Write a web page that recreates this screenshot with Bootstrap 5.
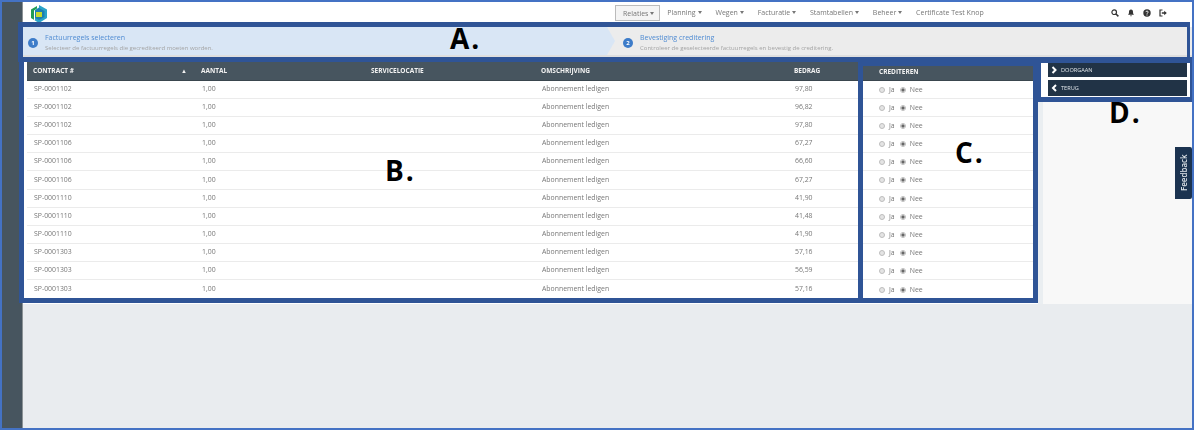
<!DOCTYPE html>
<html lang="nl">
<head>
    <meta charset="UTF-8">
    <meta name="viewport" content="width=device-width, initial-scale=1.0">
    <title>Crediteren</title>
    <link href="https://cdn.jsdelivr.net/npm/bootstrap@5.3.0/dist/css/bootstrap.min.css" rel="stylesheet">
    <style>
        html, body { height: 100%; overflow: hidden; }
        body { font-family: "Open Sans", "Liberation Sans", sans-serif; background: #e9ecef; color: #777; }
        .shot { position: relative; width: 1194px; height: 430px; }
        .side-strip { width: 23px; background: #47555f; border-right: 1px solid #8b9296; }
        .page-body { filter: blur(0.3px); }

        .top-bar { height: 27px; background: #fff; padding: 5px 0 0 7px; align-items: flex-start; }
        .top-logo { display: block; }
        .top-bar .nav-link { font-size: 7px; line-height: 16px; height: 16px; padding: 0 6.9px; color: #777; border: 0; }
        .top-bar .nav-link.current { background: #f4f4f4; border: 1px solid #bbb; padding: 0 5px 0 7px; }
        .top-bar .dropdown-toggle::after { margin-left: 2px; vertical-align: 1px; border-top-width: 3px; border-left-width: 2.5px; border-right-width: 2.5px; }
        .top-menu { margin-left: 567px; }
        .top-icons { margin-left: 120px; gap: 8px; padding-top: 4px; }

        .step-bar { height: 30px; background: #ececec; border-bottom: 2px solid #dfdfdf; }
        .step-one, .step-two { align-items: center; padding-left: 5px; padding-top: 3px; }
        .step-one { width: 592px; height: 28px; background: #d9e6f5; clip-path: polygon(0 0, 584px 0, 592px 50%, 584px 100%, 0 100%); flex: none; }
        .step-two { padding-left: 8px; }
        .step-num { width: 10px; height: 10px; border-radius: 50%; background: #3d7cc9; color: #fff; font-size: 6px; font-weight: 700; line-height: 10px; text-align: center; margin-right: 7px; flex: none; }
        .step-title { font-size: 7px; line-height: 10px; color: #4f8bd2; }
        .step-sub { font-size: 6px; line-height: 10px; color: #a4a4a4; }

        .work-area { height: 247px; background: #f7f7f7; }
        .list-wrap { width: 1015px; background: #fff; padding: 5px 0 0 4px; gap: 5px; }
        .bill-table { margin: 0; table-layout: fixed; font-size: 6.9px; }
        .bill-main { width: 831px; }
        .bill-check { width: 170px; }
        .bill-table th { height: 18px; padding: 0 0 0 6px; background: #47555f; color: #f2f2f2; font-size: 6.5px; font-weight: 700; text-transform: uppercase; vertical-align: middle; border-bottom: 1px solid #3a464e; }
        .bill-table td { height: 18px; padding: 1px 0 0 7px; color: #777; vertical-align: middle; border-bottom: 1.5px solid #ebebeb; background: #fff; box-shadow: none; }
        .bill-table tbody tr:nth-child(6n) td { height: 19px; }
        .bill-table tbody tr:last-child td { border-bottom: 0; }
        .bill-check th { height: 14px; padding: 0 0 2px 16px; }
        .bill-check td { padding-left: 16px; padding-top: 2px; }
        .bill-gap { height: 4px; }
        .sort-mark { float: right; margin-right: 8px; font-size: 6px; line-height: 10px; }
        .check-form { display: flex; align-items: center; }
        .check-form .form-check-input { width: 6px; height: 6px; margin: 0 4px 0 0; background-color: #e4e4e4; border: 1px solid #bdbdbd; }
        .check-form .form-check-input:checked { background-color: #fff; border-color: #bdbdbd; background-image: radial-gradient(circle, #666 0 1.5px, transparent 1.7px); }
        .check-form label { margin-right: 5px; }

        .action-col { width: 156px; }
        .action-box { height: 40px; background: #fff; padding: 6px 2px 0 10px; }
        .action-btn { display: flex; align-items: center; gap: 3px; width: 139px; height: 16px; padding: 0 0 0 3px; margin-bottom: 3px; border: 0; border-radius: 0; background: #213346; color: #dfe4e8; font-size: 5.6px; text-transform: uppercase; }
        .action-btn:first-child { height: 14px; }
        .action-space { height: 207px; margin: 0 2px 0 0; background: #f8f8f8; border-left: 5px solid #eaeef1; }

        .feedback-tab { position: absolute; left: 1175px; top: 147px; width: 17px; height: 52px; background: #1b3350; color: #dfe4e8; border-radius: 2px 0 0 2px; font-size: 8px; font-weight: 600; writing-mode: vertical-rl; transform: rotate(180deg); display: flex; align-items: center; justify-content: center; }

        .mark-box { position: absolute; border: 5px solid #2f5496; pointer-events: none; }
        .mark-a { left: 18px; top: 22px; width: 1172px; height: 40px; border-right-width: 3px; }
        .mark-b { left: 19px; top: 57px; width: 844px; height: 246px; }
        .mark-c { left: 858px; top: 57px; width: 180px; height: 246px; border-top-width: 9px; }
        .mark-d { left: 1034px; top: 57px; width: 160px; height: 45px; border-left-width: 7px; border-top-width: 6px; border-right-width: 4px; }
        .mark-word { position: absolute; color: #000; font-family: "Open Sans", sans-serif; font-weight: 700; font-size: 28px; letter-spacing: 2px; line-height: 30px; }
        .word-a { left: 450px; top: 23px; }
        .word-b { left: 385px; top: 155px; }
        .word-c { left: 955px; top: 137px; }
        .word-d { left: 1109px; top: 97px; }
        .shot-edge { position: absolute; inset: 0; border: 2px solid #4472c4; pointer-events: none; }
    </style>
</head>
<body>
    <div class="shot d-flex">
        <div class="side-strip flex-shrink-0"></div>
        <div class="page-body flex-grow-1">
            <nav class="top-bar d-flex">
                <svg class="top-logo flex-shrink-0" width="18" height="18" viewBox="0 0 18 18">
                    <polygon points="9,0 17,4.500 17,13 9,18 5,15.500 5,5 9,2.500" fill="#2aa3c9"/>
                    <polygon points="1,4.500 7,1 7,3.500 4,5.500 4,15 9,18 1,13" fill="#1f9c55"/>
                    <polygon points="5,5.500 9,3 14.500,6 14.500,12 9,15 5,13" fill="#1c7fb0"/>
                    <polygon points="6,7 12,7 12,12 6,12" fill="#c3d92f"/>
                </svg>
                <ul class="nav top-menu flex-nowrap">
                    <li class="nav-item"><a class="nav-link current dropdown-toggle" href="#">Relaties</a></li>
                    <li class="nav-item"><a class="nav-link dropdown-toggle" href="#">Planning</a></li>
                    <li class="nav-item"><a class="nav-link dropdown-toggle" href="#">Wegen</a></li>
                    <li class="nav-item"><a class="nav-link dropdown-toggle" href="#">Facturatie</a></li>
                    <li class="nav-item"><a class="nav-link dropdown-toggle" href="#">Stamtabellen</a></li>
                    <li class="nav-item"><a class="nav-link dropdown-toggle" href="#">Beheer</a></li>
                    <li class="nav-item"><a class="nav-link" href="#">Certificate Test Knop</a></li>
                </ul>
                <div class="d-flex top-icons">
                    <svg width="8" height="8" viewBox="0 0 8 8"><circle cx="3.200" cy="3.200" r="2.300" fill="none" stroke="#333" stroke-width="1.200"/><path d="M5 5l2.400 2.400" stroke="#333" stroke-width="1.500"/></svg>
                    <svg width="8" height="8" viewBox="0 0 8 8"><path d="M4 .5c1.500 0 2 1.200 2 2.500 0 1.500.4 2 1 2.800H1c.6-.8 1-1.300 1-2.800C2 1.700 2.500.5 4 .5zM3 6.500h2c0 1-2 1-2 0z" fill="#333"/></svg>
                    <svg width="8" height="8" viewBox="0 0 8 8"><circle cx="4" cy="4" r="3.700" fill="#333"/><path d="M2.900 3.100c0-1.400 2.300-1.400 2.300 0 0 .9-1.200.8-1.200 1.700" fill="none" stroke="#fff" stroke-width=".9"/><path d="M3.500 5.600h1v1h-1z" fill="#fff"/></svg>
                    <svg width="8" height="8" viewBox="0 0 8 8"><path d="M3.500 1H1v6h2.500" fill="none" stroke="#333" stroke-width="1.200"/><path d="M2.800 3.200h2.400V1.700L7.800 4 5.200 6.300V4.800H2.800z" fill="#333"/></svg>
                </div>
            </nav>

            <div class="step-bar d-flex">
                <div class="step-one d-flex">
                    <span class="step-num">1</span>
                    <div>
                        <div class="step-title">Factuurregels selecteren</div>
                        <div class="step-sub">Selecteer de factuurregels die gecrediteerd moeten worden.</div>
                    </div>
                </div>
                <div class="step-two d-flex">
                    <span class="step-num">2</span>
                    <div>
                        <div class="step-title">Bevestiging creditering</div>
                        <div class="step-sub">Controleer de geselecteerde factuurregels en bevestig de creditering.</div>
                    </div>
                </div>
            </div>

            <div class="work-area d-flex">
                <div class="list-wrap d-flex">
                    <div>
                        <table class="table bill-table bill-main">
                            <colgroup>
                                <col style="width: 168px">
                                <col style="width: 170px">
                                <col style="width: 170px">
                                <col style="width: 253px">
                                <col style="width: 70px">
                            </colgroup>
                            <thead>
                                <tr><th>Contract # <span class="sort-mark">&#9650;</span></th><th>Aantal</th><th>Servicelocatie</th><th>Omschrijving</th><th>Bedrag</th></tr>
                            </thead>
                            <tbody>
                                <tr><td>SP-0001102</td><td>1,00</td><td></td><td>Abonnement ledigen</td><td>97,80</td></tr>
                                <tr><td>SP-0001102</td><td>1,00</td><td></td><td>Abonnement ledigen</td><td>96,82</td></tr>
                                <tr><td>SP-0001102</td><td>1,00</td><td></td><td>Abonnement ledigen</td><td>97,80</td></tr>
                                <tr><td>SP-0001106</td><td>1,00</td><td></td><td>Abonnement ledigen</td><td>67,27</td></tr>
                                <tr><td>SP-0001106</td><td>1,00</td><td></td><td>Abonnement ledigen</td><td>66,60</td></tr>
                                <tr><td>SP-0001106</td><td>1,00</td><td></td><td>Abonnement ledigen</td><td>67,27</td></tr>
                                <tr><td>SP-0001110</td><td>1,00</td><td></td><td>Abonnement ledigen</td><td>41,90</td></tr>
                                <tr><td>SP-0001110</td><td>1,00</td><td></td><td>Abonnement ledigen</td><td>41,48</td></tr>
                                <tr><td>SP-0001110</td><td>1,00</td><td></td><td>Abonnement ledigen</td><td>41,90</td></tr>
                                <tr><td>SP-0001303</td><td>1,00</td><td></td><td>Abonnement ledigen</td><td>57,16</td></tr>
                                <tr><td>SP-0001303</td><td>1,00</td><td></td><td>Abonnement ledigen</td><td>56,59</td></tr>
                                <tr><td>SP-0001303</td><td>1,00</td><td></td><td>Abonnement ledigen</td><td>57,16</td></tr>
                            </tbody>
                        </table>
                    </div>
                    <div>
                        <div class="bill-gap"></div>
                        <table class="table bill-table bill-check">
                            <thead><tr><th>Crediteren</th></tr></thead>
                            <tbody id="check-rows"></tbody>
                        </table>
                    </div>
                </div>
                <div class="action-col">
                    <div class="action-box">
                        <button type="button" class="btn action-btn"><svg width="7" height="8" viewBox="0 0 7 8"><path d="M1.500 1l3 3-3 3" fill="none" stroke="#fff" stroke-width="2"/></svg>Doorgaan</button>
                        <button type="button" class="btn action-btn"><svg width="7" height="8" viewBox="0 0 7 8"><path d="M5 1L2 4l3 3" fill="none" stroke="#fff" stroke-width="2"/></svg>Terug</button>
                    </div>
                    <div class="action-space"></div>
                </div>
            </div>
        </div>

        <div class="feedback-tab">Feedback</div>

        <div class="mark-box mark-a"></div>
        <div class="mark-box mark-b"></div>
        <div class="mark-box mark-c"></div>
        <div class="mark-box mark-d"></div>
        <div class="mark-word word-a">A.</div>
        <div class="mark-word word-b">B.</div>
        <div class="mark-word word-c">C.</div>
        <div class="mark-word word-d">D.</div>
        <div class="shot-edge"></div>
    </div>

    <script src="https://cdn.jsdelivr.net/npm/bootstrap@5.3.0/dist/js/bootstrap.bundle.min.js"></script>
    <script>
        const rows = document.getElementById('check-rows');
        for (let i = 0; i < 12; i++) {
            rows.innerHTML += `<tr><td><div class="check-form">
                <input class="form-check-input" type="radio" name="credit-${i}" id="ja-${i}">
                <label for="ja-${i}">Ja</label>
                <input class="form-check-input" type="radio" name="credit-${i}" id="nee-${i}" checked>
                <label for="nee-${i}">Nee</label>
            </div></td></tr>`;
        }
    </script>
</body>
</html>
